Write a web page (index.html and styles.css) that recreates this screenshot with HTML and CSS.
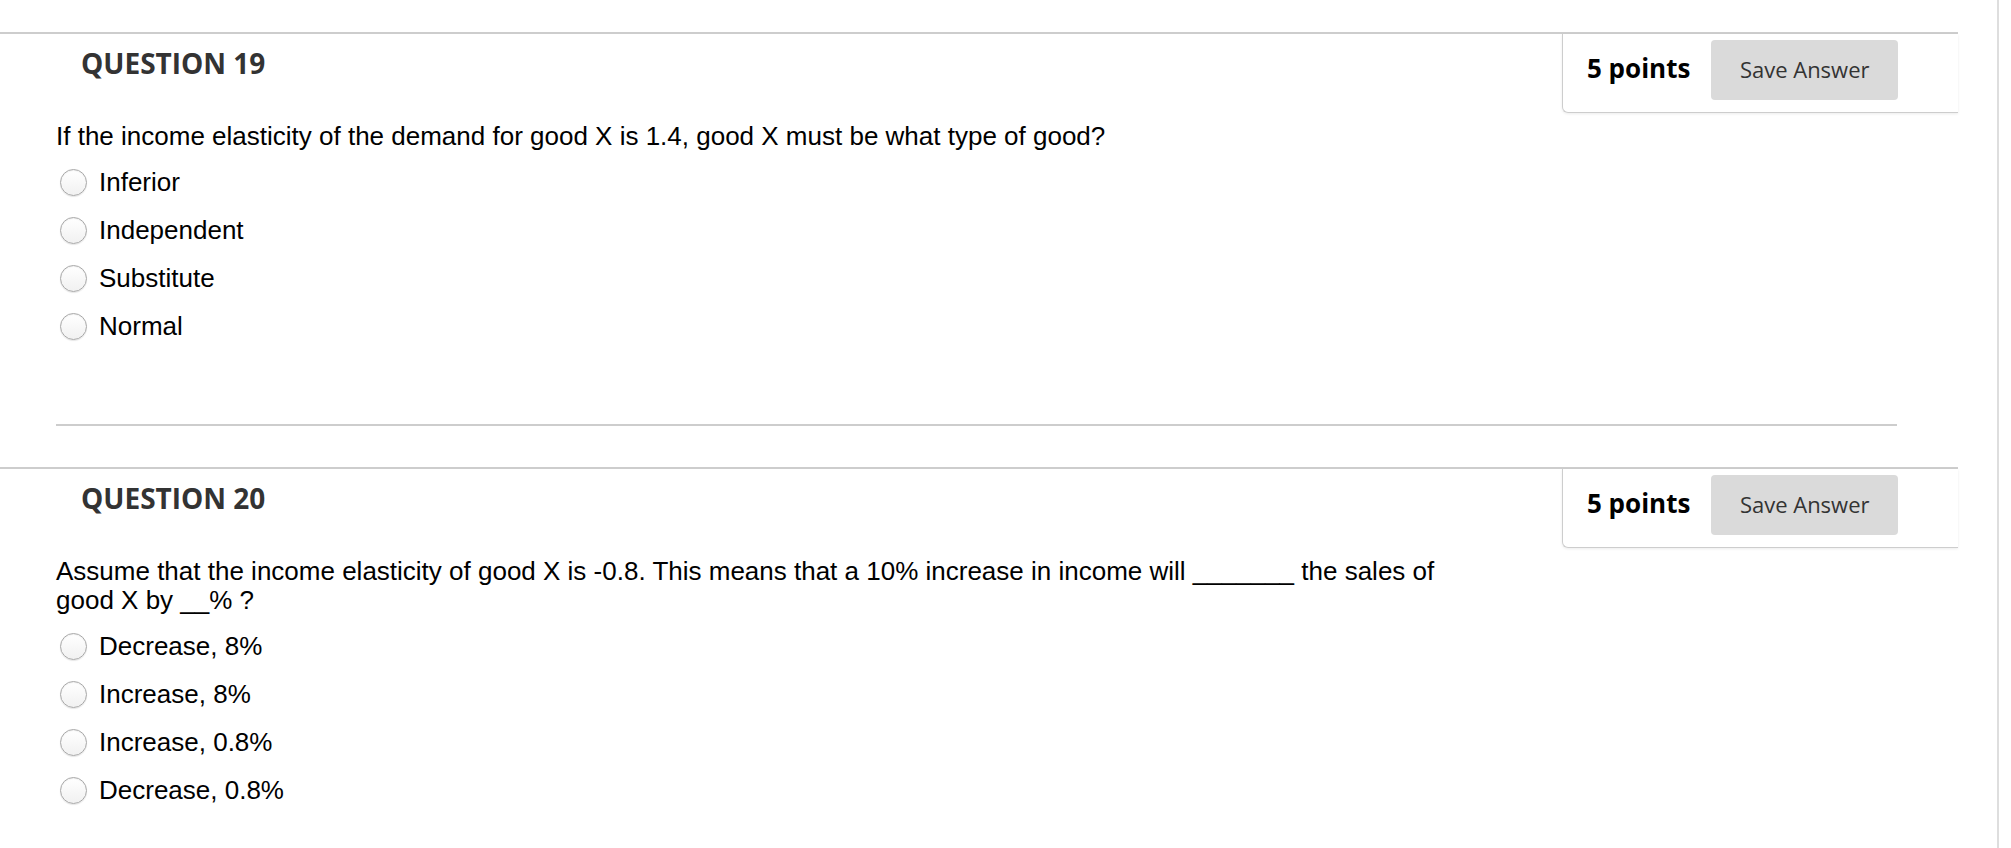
FILE: index.html
```html
<!DOCTYPE html>
<html lang="en">
<head>
<meta charset="utf-8">
<title>Quiz</title>
<link rel="stylesheet" href="styles.css">
</head>
<body>
<div class="page">
  <section class="question">
    <div class="q-head">
      <h2 class="q-title">QUESTION 19</h2>
      <div class="q-points">
        <span class="pts">5 points</span>
        <button class="save" type="button">Save Answer</button>
      </div>
    </div>
    <div class="q-body">
      <p class="q-text">If the income elasticity of the demand for good X is 1.4, good X must be what type of good?</p>
      <ul class="options">
        <li><input type="radio" name="q19"><label>Inferior</label></li>
        <li><input type="radio" name="q19"><label>Independent</label></li>
        <li><input type="radio" name="q19"><label>Substitute</label></li>
        <li><input type="radio" name="q19"><label>Normal</label></li>
      </ul>
    </div>
    <hr class="sep">
  </section>
  <section class="question">
    <div class="q-head">
      <h2 class="q-title">QUESTION 20</h2>
      <div class="q-points">
        <span class="pts">5 points</span>
        <button class="save" type="button">Save Answer</button>
      </div>
    </div>
    <div class="q-body">
      <p class="q-text">Assume that the income elasticity of good X is -0.8. This means that a 10% increase in income will _______ the sales of good X by __% ?</p>
      <ul class="options">
        <li><input type="radio" name="q20"><label>Decrease, 8%</label></li>
        <li><input type="radio" name="q20"><label>Increase, 8%</label></li>
        <li><input type="radio" name="q20"><label>Increase, 0.8%</label></li>
        <li><input type="radio" name="q20"><label>Decrease, 0.8%</label></li>
      </ul>
    </div>
  </section>
</div>
</body>
</html>
```
FILE: styles.css
```css
html, body {
  margin: 0;
  padding: 0;
  background: #fff;
}
body {
  font-family: "Liberation Sans", Arial, sans-serif;
  color: #000;
  overflow: hidden;
}
.page {
  width: 1999px;
  min-height: 848px;
  border-right: 2px solid #dedede;
  padding-top: 32px;
  box-sizing: border-box;
}
.q-head {
  width: 1958px;
  border-top: 2px solid #cdcdcd;
  display: flex;
  justify-content: space-between;
  align-items: flex-start;
}
.q-title {
  margin: 10px 0 0 81px;
  font-family: "Open Sans", sans-serif;
  font-weight: 700;
  font-size: 28px;
  line-height: 38px;
  color: #333;
}
.q-points {
  display: flex;
  align-items: center;
  gap: 21px;
  width: 396px;
  box-sizing: border-box;
  padding: 6px 60px 12px 24px;
  border-left: 1px solid #cdcdcd;
  border-bottom: 1px solid #cdcdcd;
  border-bottom-left-radius: 6px;
  box-shadow: 0 1px 3px rgba(0, 0, 0, 0.08);
}
.pts {
  font-family: "Open Sans", sans-serif;
  font-weight: 700;
  font-size: 26px;
  color: #000;
  margin-bottom: 5px;
  white-space: nowrap;
}
.save {
  width: 187px;
  height: 60px;
  border: none;
  border-radius: 4px;
  background: #dadada;
  font-family: "Open Sans", sans-serif;
  font-size: 22px;
  color: #333;
  padding: 0 0 2px 0;
}
.q-body {
  padding-left: 56px;
}
.q-text {
  margin: 9px 0 0 0;
  max-width: 1410px;
  font-size: 26px;
  line-height: 29px;
}
.options {
  list-style: none;
  margin: 7px 0 0 0;
  padding: 0;
}
.options li {
  height: 48px;
  display: flex;
  align-items: center;
  font-size: 26px;
}
.options input {
  appearance: none;
  -webkit-appearance: none;
  width: 27px;
  height: 27px;
  margin: 0 12px 0 4px;
  border: 1px solid #a8a8a8;
  border-radius: 50%;
  background: linear-gradient(#ffffff, #f1f1f1);
  box-shadow: inset 0 1px 1px rgba(0, 0, 0, 0.06), 0 1px 1px rgba(0, 0, 0, 0.1);
  box-sizing: border-box;
  flex: none;
}
.sep {
  margin: 74px 0 41px 56px;
  width: 1841px;
  height: 0;
  border: none;
  border-top: 2px solid #cdcdcd;
}
```
